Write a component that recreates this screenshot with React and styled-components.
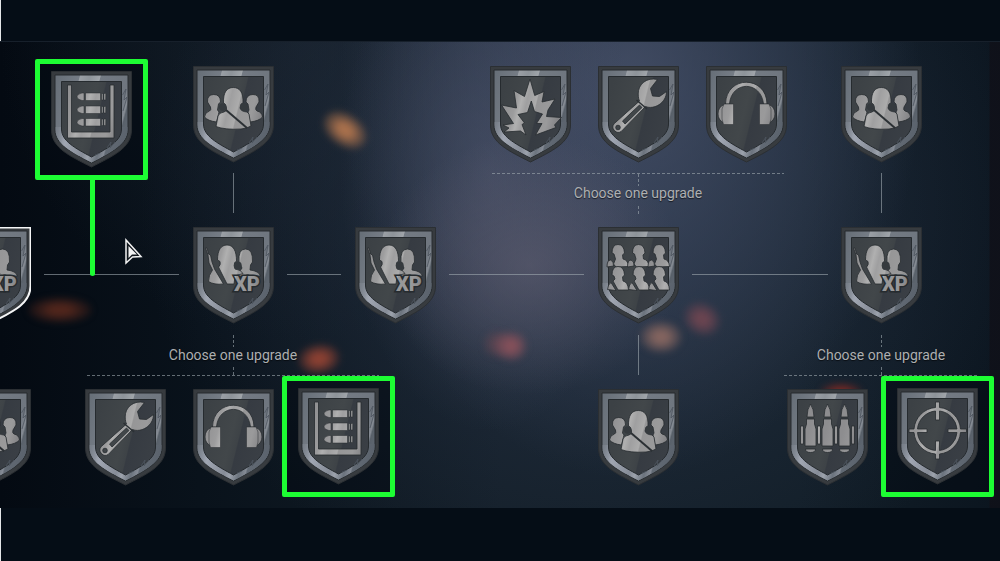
import React from 'react';
import styled, {createGlobalStyle, css} from 'styled-components';

const GlobalStyle = createGlobalStyle`
  * {
    box-sizing: border-box;
  }
  body {
    margin: 0;
    background: #050d16;
    font-family: Roboto, "Open Sans", sans-serif;
  }
`;

const palette = {
    bar: '#050d16',
    mark: '#1dfd33',
    line: 'rgba(160, 170, 176, 0.6)',
    text: '#adafb1',
    groove: '#262b2f',
};

const Page = styled.div`
  display: flex;
  flex-direction: column;
  min-height: 100vh;
`;

const Bar = styled.div`
  height: 41px;
  flex-grow: ${({$grow}) => ($grow ? 1 : 0)};
  background: ${palette.bar};
  border-left: 1px solid #e4e6e8;
`;

const Board = styled.main`
  position: relative;
  height: 467px;
  overflow: hidden;
  background:
    linear-gradient(to left, rgba(16, 16, 24, 0.8) 10px, transparent 11px),
    radial-gradient(ellipse 150px 130px at 53% 48%, rgba(104, 100, 118, 0.5), transparent),
    radial-gradient(ellipse 150px 260px at 49% 28%, rgba(84, 90, 114, 0.5), transparent),
    radial-gradient(ellipse 290px 400px at 63% 8%, rgba(76, 86, 112, 0.75), rgba(66, 77, 102, 0.5) 45%, transparent),
    radial-gradient(ellipse 460px 400px at 60% 36%, rgba(48, 60, 82, 0.6), transparent),
    radial-gradient(ellipse 300px 300px at 30% 0%, rgba(28, 38, 50, 0.6), transparent),
    linear-gradient(to right, #040a12, #09121b 20%, #131e28 50%, #121e28 80%, #0b151f);
  box-shadow: inset 0 1px 0 #17202b;
`;

/* everything on the tree is placed by its own coordinates */
const Spot = styled.div`
  position: absolute;
  left: ${({$x}) => $x}px;
  top: ${({$y}) => $y}px;
`;

const Ember = styled(Spot)`
  width: ${({$w}) => $w}px;
  height: ${({$h}) => $h}px;
  border-radius: 45%;
  background: radial-gradient(closest-side, ${({$color}) => $color} 30%, transparent 115%);
  filter: blur(3px);
  transform: rotate(${({$turn}) => $turn || 0}deg);
`;

const Line = styled(Spot)`
  width: ${({$w}) => $w || 1}px;
  height: ${({$h}) => $h || 1}px;
  background: ${palette.line};
  ${({$dashed, $w}) =>
      $dashed &&
      css`
        background: repeating-linear-gradient(
          ${$w ? 'to right' : 'to bottom'},
          ${palette.line} 0 3px,
          transparent 3px 5px
        );
      `}
`;

const Label = styled(Spot)`
  width: 160px;
  text-align: center;
  font-size: 14px;
  line-height: 20px;
  color: ${palette.text};
  text-shadow: 0 1px 1px rgba(0, 0, 0, 0.6);
`;

const NodeButton = styled.button`
  display: block;
  padding: 0;
  border: none;
  background: none;
  cursor: pointer;
  svg {
    display: block;
  }
`;

const Frame = styled(Spot)`
  display: flex;
  align-items: center;
  justify-content: center;
  width: 113px;
  height: 121px;
  border: 5px solid ${palette.mark};
  border-radius: 2px;
  background: rgba(2, 7, 16, 0.5);
`;

const Pointer = styled(Spot)`
  width: 5px;
  height: ${({$h}) => $h}px;
  border-radius: 0 0 3px 3px;
  background: ${palette.mark};
`;

const Trio = () => (
    <>
        <path d="M14.500 36 Q14 28.500 20.800 28.500 Q27.500 28.500 27.500 36 L25.500 38 L24.500 44 L26 46 L23.500 56 Q15 55 11.500 51 Q12 46 16.500 45 Q18.500 44 17.500 41Z"/>
        <path d="M66 36 Q66.500 28.500 60 28.500 Q53 28.500 53 36 L55 38 L56 44 L55 46 L57 56 Q66 55 69.500 51 Q69 46 64 45 Q62 44 63 41Z"/>
        <path d="M30.500 37 C30 26 34 21.500 40.300 21.500 C46.500 21.500 50.500 26 50 37 L48 38 L47 42 Q48 45.500 54 46 L56 48 L58 60 Q54 62.500 48 63 Q32 64 23 60.500 L25 50 Q26 46.500 31 46 Q34 45 33.500 42 L32 38Z"/>
        <g fill="#353a3e" stroke="none">
            <circle cx="29.800" cy="41" r="3.800"/>
            <circle cx="51" cy="41" r="3.800"/>
        </g>
        <path d="M33 44 L54 62" stroke="#2b3034" strokeWidth="2"/>
    </>
);

const SoldierXp = () => (
    <>
        <path d="M12.500 21 L14 21 L15.500 27 L17.500 28 L19 35 L21.500 42 L30.500 57 Q21 58 15.500 54.500 Q15.500 48 19.500 43 L16 36 L15 28Z"/>
        <path d="M46 35 Q45 22 52.500 22 Q60 22 59.500 35 L57.500 38 L57 43 Q66 44 67.500 49 L44 49 L47 44 L49 41Z"/>
        <path d="M24.500 33 C24.500 23 28 18 34 18 C40.500 18 43.500 24 43.500 34 L41.500 36 L42 42 Q48 42.500 50 46.500 L42 49 L41 57 L34 57 L25.500 40 Q28 38 27 34.500Z"/>
        <circle cx="44.700" cy="38.500" r="4" fill="#353a3e" stroke="none"/>
        <text
            x="54"
            y="64"
            textAnchor="middle"
            fontFamily="Roboto"
            fontWeight="900"
            fontSize="20"
            strokeWidth="3"
            paintOrder="stroke"
        >
            XP
        </text>
    </>
);

const Magazine = () => (
    <>
        <path d="M16.500 14 H20.500 V61 H59 V14 H63 V67 H16.500Z"/>
        {[22, 35, 47.5].map(y => (
            <g key={y} transform={`translate(0 ${y})`} strokeWidth="0.500">
                <path d="M33 0 H31 Q26 1 26 3.800 Q26 6.500 31 7.500 H33Z"/>
                <path d="M34.500 0 H49.500 V7.500 H34.500Z"/>
                <path d="M50.700 0.500 H52 V7 H50.700Z"/>
                <path d="M53 0.500 H54.700 V7 H53Z"/>
            </g>
        ))}
    </>
);

const Wrench = () => (
    <>
        <path
            fillRule="evenodd"
            d="M59.500 13.500 C49 11 40 18 40.200 28 C40.300 32 41 34 41.500 35 L16.300 57.500 A5.300 5.300 0 0 0 23.500 65.200 L47.500 40.500 C56 44 68.500 37 68.500 25.500 L61.500 30.500 L54.500 30 L52.500 22.500Z
            M22.300 61.500 A2.300 2.300 0 1 1 17.700 61.500 A2.300 2.300 0 1 1 22.300 61.500Z
            M24.500 55 L41.500 39 L44 41.500 L27 58Z"
        />
        <path d="M38.500 34 L49 43" stroke="#2b3034" strokeWidth="1.500"/>
    </>
);

const Headphones = () => (
    <>
        <path d="M19.500 38 C20 9 60.500 9 61 38 L57.500 38 C55 14.500 25.500 14.500 23.500 38Z"/>
        <path d="M18 38.500 Q12 41 12 48 Q12 54 18 57Z"/>
        <path d="M63 38.500 Q69 41 69 48 Q69 54 63 57Z"/>
        <path d="M18 38 H27.500 V58.500 H17.500 L16 53 V43Z" strokeWidth="0.500"/>
        <path d="M63 38 H53.500 V58.500 H63.500 L65 53 V43Z" strokeWidth="0.500"/>
    </>
);

const Blast = () => (
    <path d="M40 13 L44.700 29.500 L54 25.500 L52 36 L65 33 L58 44 L56.500 50.500 L71.500 51.500 L64.500 59 L66 61.500 L45.500 69 L52 57.500 L46.500 57.500 L52.500 48 L44.500 45.500 L41.300 35 L37.500 46.500 L28 48.500 L34.500 57 L32 58.500 L36 69 L30.500 65 L14 66 L19 62 L13 59 L23.500 57.500 L11.500 39 L26.500 42 L24 24.500 L34.500 30.500Z"/>
);

const Platoon = () => (
    <>
        {[0, 20.5, 41].map(x => (
            <g key={x} transform={`translate(${x} 0)`}>
                <path d="M14 26 Q14 17.500 20 17.500 Q26 17.500 26.500 26 L24.500 28 L25 32 Q30 33 30.500 39.500 L18 40 L15.500 37 L17.500 32 L16 27Z"/>
                <path d="M9 40 Q9 33 12.500 33 Q16 34 15.500 39Z"/>
            </g>
        ))}
        {[0, 21, 41].map(x => (
            <g key={x} transform={`translate(${x} 0)`}>
                <path d="M14 48 Q14 39.500 20 39.500 Q26 39.500 26.500 48 L24.500 50 L25 54 Q30 55 30.500 63 L20 63 L15 54 L17 52 L16 49Z"/>
                <path d="M9.500 62.500 Q10 57 13 55.500 L18 63.500Z"/>
            </g>
        ))}
    </>
);

const Rounds = () => (
    <>
        {[13.5, 30.5, 47.5].map(x => (
            <g key={x} transform={`translate(${x} 0)`}>
                <path d="M6.500 28 Q6.500 20 10 15 Q13.500 20 13.500 28Z"/>
                <path d="M6 30 H14 V35 L15.500 40 V57 H4.500 V40 L6 35Z"/>
                <path d="M5 60 H15 Q15 63.500 10 63.500 Q5 63.500 5 60Z"/>
            </g>
        ))}
        <path d="M13.500 37 H16.500 V55 H13.500Z M30.500 37 H33.500 V55 H30.500Z M47.500 37 H50.500 V55 H47.500Z M64.500 37 H67.500 V55 H64.500Z"/>
    </>
);

const Reticle = () => (
    <path
        fillRule="evenodd"
        d="M38.500 14 H42.500 V19.500 A23.500 23.500 0 0 1 63.500 41 H69.500 V44.500 H63.500 A23.500 23.500 0 0 1 42.500 66 V71 H38.500 V66 A23.500 23.500 0 0 1 17 44.500 H12 V41 H17 A23.500 23.500 0 0 1 38.500 19.500Z
        M38.500 23 A20 20 0 0 0 20.500 41 H30 V44.500 H20.500 A20 20 0 0 0 38.500 62.500 V53 H42.500 V62.500 A20 20 0 0 0 60 44.500 H51 V41 H60 A20 20 0 0 0 42.500 23 V32 H38.500Z"
    />
);

const icons = {
    trio: Trio,
    xp: SoldierXp,
    magazine: Magazine,
    wrench: Wrench,
    headphones: Headphones,
    blast: Blast,
    platoon: Platoon,
    rounds: Rounds,
    reticle: Reticle,
};

const HiddenDefs = styled.svg`
  position: absolute;
`;

/* gradients shared by all shields */
const Metals = () => (
    <HiddenDefs width="0" height="0" aria-hidden="true">
        <defs>
            <linearGradient id="rim" gradientUnits="userSpaceOnUse" x1="0" y1="20" x2="81" y2="42">
                <stop offset="0" stopColor="#666e77"/>
                <stop offset="0.280" stopColor="#757c85"/>
                <stop offset="0.290" stopColor="#9a9fa5"/>
                <stop offset="0.400" stopColor="#8d9399"/>
                <stop offset="0.520" stopColor="#a0a5aa"/>
                <stop offset="0.530" stopColor="#737a83"/>
                <stop offset="0.850" stopColor="#6f767f"/>
                <stop offset="0.910" stopColor="#858b93"/>
                <stop offset="0.930" stopColor="#59616a"/>
                <stop offset="1" stopColor="#5f6771"/>
            </linearGradient>
            <linearGradient id="rimLow" gradientUnits="userSpaceOnUse" x1="5" y1="62" x2="76" y2="80">
                <stop offset="0" stopColor="#7e858f" stopOpacity="0.600"/>
                <stop offset="0.150" stopColor="#a0a6b2"/>
                <stop offset="0.420" stopColor="#868c97"/>
                <stop offset="0.500" stopColor="#9ca2ac"/>
                <stop offset="0.620" stopColor="#6b737d"/>
                <stop offset="0.700" stopColor="#858b95"/>
                <stop offset="0.720" stopColor="#626a74"/>
                <stop offset="1" stopColor="#59616b"/>
            </linearGradient>
            <linearGradient id="plate" gradientUnits="userSpaceOnUse" x1="10" y1="35" x2="71" y2="50">
                <stop offset="0" stopColor="#3c4145"/>
                <stop offset="0.480" stopColor="#42474a"/>
                <stop offset="0.600" stopColor="#3e4347"/>
                <stop offset="0.620" stopColor="#363b42"/>
                <stop offset="1" stopColor="#3a3f45"/>
            </linearGradient>
            <linearGradient id="steel" gradientUnits="userSpaceOnUse" x1="10" y1="35" x2="71" y2="50">
                <stop offset="0" stopColor="#8d8d8f"/>
                <stop offset="0.250" stopColor="#9c9c9d"/>
                <stop offset="0.330" stopColor="#b0b0b0"/>
                <stop offset="0.420" stopColor="#9f9fa0"/>
                <stop offset="0.560" stopColor="#acacac"/>
                <stop offset="0.580" stopColor="#969697"/>
                <stop offset="0.800" stopColor="#9a9a9b"/>
                <stop offset="1" stopColor="#7f7f82"/>
            </linearGradient>
        </defs>
    </HiddenDefs>
);

const Shield = ({icon, title, active}) => {
    const Icon = icons[icon];
    return (
        <NodeButton type="button" aria-label={title}>
            <svg width="81" height="97" viewBox="0 0 81 97">
                <path
                    d="M0.500 0.500 H80.500 V59 C80.500 77 62 85 40.500 96 C19 85 0.500 77 0.500 59Z"
                    fill="#373b3f"
                    stroke={active ? '#f4f5f6' : '#2b2f33'}
                    strokeWidth={active ? 2 : 1}
                />
                <path
                    d="M4 4 H77 V59 C77 73 61 81 40.500 92 C20 81 4 73 4 59Z"
                    fill="url(#rim)"
                    stroke={palette.groove}
                />
                <path d="M4.500 56 L10 56 H71 L76.500 56 V59 C76 73 61 81 40.500 91.500 C20 81 5 73 4.500 59Z" fill="url(#rimLow)"/>
                <path
                    d="M10.500 10.500 H70.500 V58 C70.500 70 57 77 40.500 86 C24 77 10.500 70 10.500 58Z"
                    fill="url(#plate)"
                    stroke={palette.groove}
                />
                <path
                    d="M71.500 24 L75 18 L73 29 L76 26 L72 40 M56 77 L60 71 L59 77 L64 71 M44 84 L49 82"
                    fill="none"
                    stroke="#4e565f"
                    strokeWidth="0.800"
                />
                <g fill="url(#steel)" stroke={palette.groove} strokeWidth="0.800">
                    <Icon/>
                </g>
            </svg>
        </NodeButton>
    );
};

const embers = [
    {x: 321, y: 73, w: 48, h: 32, color: '#a8704c', turn: 35},
    {x: 28, y: 256, w: 64, h: 26, color: '#51261c'},
    {x: 298, y: 303, w: 42, h: 30, color: '#8a4032', turn: -8},
    {x: 483, y: 289, w: 28, h: 28, color: '#74485188'},
    {x: 495, y: 290, w: 32, h: 30, color: '#84505a'},
    {x: 640, y: 280, w: 42, h: 32, color: '#83645f'},
    {x: 683, y: 262, w: 38, h: 32, color: '#6a4450', turn: 30},
    {x: 820, y: 342, w: 42, h: 18, color: '#7a2a24'},
];

const lines = [
    {x: 233, y: 132, h: 40},
    {x: 881, y: 132, h: 40},
    {x: 638, y: 294, h: 40},
    {x: 44, y: 233, w: 135},
    {x: 287, y: 233, w: 54},
    {x: 449, y: 233, w: 135},
    {x: 692, y: 233, w: 136},
];

const choices = [
    {x: 638, y: 142, from: 492, to: 784, rule: 132, stems: [[133, 12], [165, 8]]},
    {x: 233, y: 304, from: 87, to: 379, rule: 334, stems: [[294, 12], [326, 8]]},
    {x: 881, y: 304, from: 784, to: 979, rule: 334, stems: [[294, 12], [326, 8]]},
];

const nodes = [
    {x: 193, y: 25, icon: 'trio', title: 'Squad'},
    {x: 490, y: 25, icon: 'blast', title: 'Explosives'},
    {x: 598, y: 25, icon: 'wrench', title: 'Repair'},
    {x: 706, y: 25, icon: 'headphones', title: 'Communications'},
    {x: 841, y: 25, icon: 'trio', title: 'Squad'},
    {x: -50, y: 186, icon: 'xp', title: 'Squad experience', active: true},
    {x: 193, y: 186, icon: 'xp', title: 'Squad experience'},
    {x: 355, y: 186, icon: 'xp', title: 'Squad experience'},
    {x: 598, y: 186, icon: 'platoon', title: 'Platoon'},
    {x: 841, y: 186, icon: 'xp', title: 'Squad experience'},
    {x: -50, y: 348, icon: 'trio', title: 'Squad'},
    {x: 85, y: 348, icon: 'wrench', title: 'Repair'},
    {x: 193, y: 348, icon: 'headphones', title: 'Communications'},
    {x: 598, y: 348, icon: 'trio', title: 'Squad'},
    {x: 787, y: 348, icon: 'rounds', title: 'Ammunition'},
];

const marked = [
    {x: 35, y: 18, icon: 'magazine', title: 'Magazine'},
    {x: 282, y: 335, icon: 'magazine', title: 'Magazine'},
    {x: 881, y: 335, icon: 'reticle', title: 'Accuracy'},
];

const App = () => {
    return (
        <Page>
            <GlobalStyle/>
            <Metals/>
            <Bar/>
            <Board>
                {embers.map(e => (
                    <Ember key={e.x} $x={e.x} $y={e.y} $w={e.w} $h={e.h} $color={e.color} $turn={e.turn}/>
                ))}
                {lines.map(l => (
                    <Line key={`${l.x}-${l.y}`} $x={l.x} $y={l.y} $w={l.w} $h={l.h}/>
                ))}
                {choices.map(c => (
                    <React.Fragment key={c.x}>
                        <Line $dashed $x={c.from} $y={c.rule} $w={c.to - c.from}/>
                        {c.stems.map(([y, h]) => (
                            <Line key={y} $dashed $x={c.x} $y={y} $h={h}/>
                        ))}
                        <Label $x={c.x - 80} $y={c.y}>Choose one upgrade</Label>
                    </React.Fragment>
                ))}
                {nodes.map(n => (
                    <Spot key={`${n.x}-${n.y}`} $x={n.x} $y={n.y}>
                        <Shield icon={n.icon} title={n.title} active={n.active}/>
                    </Spot>
                ))}
                {marked.map(m => (
                    <Frame key={m.x} $x={m.x} $y={m.y}>
                        <Shield icon={m.icon} title={m.title}/>
                    </Frame>
                ))}
                <Pointer $x={90} $y={138} $h={97}/>
                <Spot as="svg" $x={124} $y={196} width="20" height="28" viewBox="0 0 20 28">
                    <path d="M2 3 V26 L8.500 20 L17 19.500Z" fill="#10161c" stroke="#f2f2f2" strokeWidth="1.500"/>
                    <path d="M4.500 9 V21 L8 17.500 L13 17.500Z" fill="#f2f2f2"/>
                </Spot>
            </Board>
            <Bar $grow/>
        </Page>
    );
};

export default App;
